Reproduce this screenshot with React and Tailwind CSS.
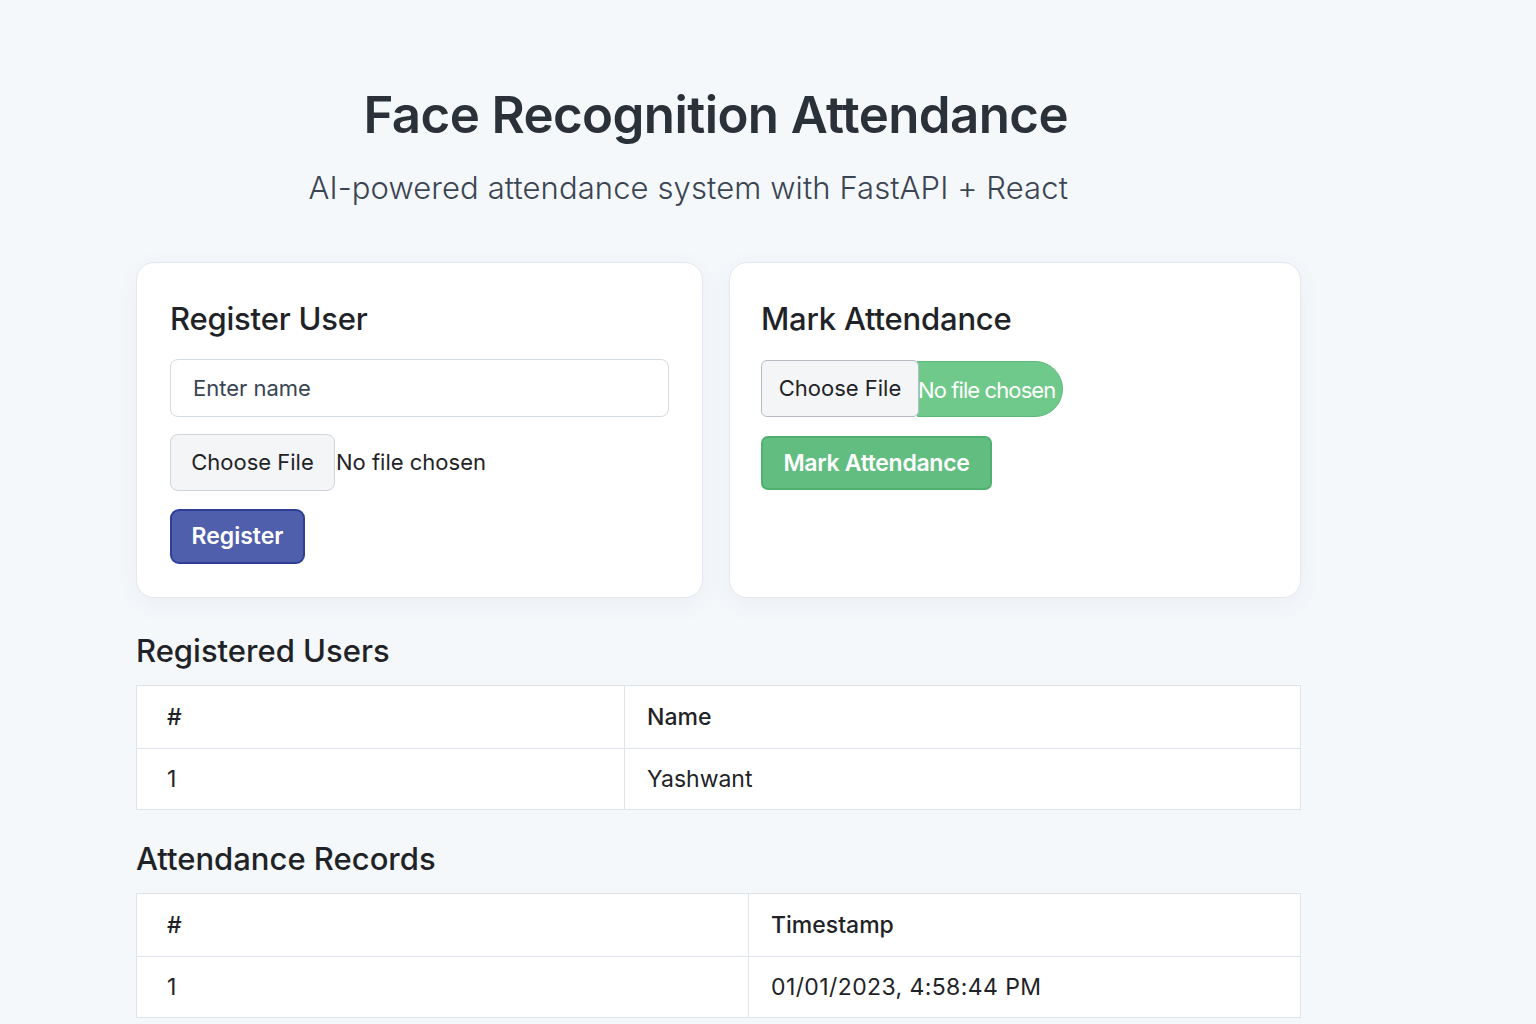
export default function App() {
  return (
    <div
      className="min-h-screen bg-[#f5f8fb] text-[#1f2328]"
      style={{ fontFamily: "Inter, 'Noto Sans', sans-serif" }}
    >
      <div className="w-[1165px] ml-[136px] pt-[84px]">
        {/* Header */}
        <div className="w-[932px] text-right">
          <h1 className="text-[51px] font-semibold leading-[62px] text-[#2b3138] tracking-[-0.6px]">
            Face Recognition Attendance
          </h1>
          <p className="mt-[22px] text-[31px] leading-[40px] text-[#3a4452] font-light tracking-[0.1px]">
            AI-powered attendance system with FastAPI + React
          </p>
        </div>

        {/* Cards */}
        <div className="mt-[54px] flex gap-[26px]">
          <div className="w-[567px] h-[336px] bg-white rounded-[18px] border border-[#e3e8ef] shadow-[0_6px_24px_rgba(30,50,90,0.05)] px-[33px] pt-[36px]">
            <h2 className="text-[31px] font-medium leading-[40px] text-[#1f2328] tracking-[-0.2px]">
              Register User
            </h2>
            <div className="mt-[20px] w-[499px] h-[58px] rounded-[8px] border border-[#d5dbe3] flex items-center px-[22px] text-[22px] text-[#3a4452]">
              Enter name
            </div>
            <div className="mt-[17px] flex items-center">
              <div className="w-[165px] h-[57px] rounded-[8px] border border-[#cfd4da] bg-[#f4f5f6] flex items-center justify-center text-[22px] text-[#1f2328]">
                Choose File
              </div>
              <span className="ml-[1px] text-[22px] text-[#1f2328]">
                No file chosen
              </span>
            </div>
            <button className="mt-[18px] w-[135px] h-[55px] rounded-[9px] border-2 border-[#2f3f98] bg-[#4f5fab] text-white text-[23px] font-semibold">
              Register
            </button>
          </div>

          <div className="w-[572px] h-[336px] bg-white rounded-[18px] border border-[#e3e8ef] shadow-[0_6px_24px_rgba(30,50,90,0.05)] px-[31px] pt-[36px]">
            <h2 className="text-[31px] font-medium leading-[40px] text-[#1f2328] tracking-[-0.2px]">
              Mark Attendance
            </h2>
            <div className="mt-[21px] flex items-center">
              <div className="relative z-10 w-[158px] h-[57px] rounded-[6px] border border-[#b8bcc2] bg-[#f4f5f6] flex items-center justify-center text-[22px] text-[#1f2328]">
                Choose File
              </div>
              <div className="-ml-[2px] h-[56px] w-[146px] rounded-r-full bg-[#6fc98a] border border-[#5cb877] flex items-center pt-[3px] text-[22px] text-white tracking-[-0.9px] whitespace-nowrap overflow-hidden">
                No file chosen
              </div>
            </div>
            <button className="mt-[19px] w-[231px] h-[54px] rounded-[7px] border-2 border-[#4fb06f] bg-[#62bd80] text-white text-[23px] font-semibold tracking-[-0.3px]">
              Mark Attendance
            </button>
          </div>
        </div>

        {/* Registered Users */}
        <h2 className="mt-[33px] text-[31px] font-medium leading-[40px] text-[#1f2328]">
          Registered Users
        </h2>
        <table className="mt-[14px] w-full border-collapse bg-white text-[23px] text-[#1f2328]">
          <tbody>
            <tr className="h-[63px]">
              <td className="w-[488px] border border-[#dfe4ea] pl-[30px] font-medium">#</td>
              <td className="border border-[#dfe4ea] pl-[22px] font-medium">Name</td>
            </tr>
            <tr className="h-[61px]">
              <td className="border border-[#dfe4ea] pl-[30px]">1</td>
              <td className="border border-[#dfe4ea] pl-[22px]">Yashwant</td>
            </tr>
          </tbody>
        </table>

        {/* Attendance Records */}
        <h2 className="mt-[29px] text-[31px] font-medium leading-[40px] text-[#1f2328]">
          Attendance Records
        </h2>
        <table className="mt-[14px] w-full border-collapse bg-white text-[23px] text-[#1f2328]">
          <tbody>
            <tr className="h-[63px]">
              <td className="w-[612px] border border-[#dfe4ea] pl-[30px] font-medium">#</td>
              <td className="border border-[#dfe4ea] pl-[22px] font-medium">Timestamp</td>
            </tr>
            <tr className="h-[61px]">
              <td className="border border-[#dfe4ea] pl-[30px]">1</td>
              <td className="border border-[#dfe4ea] pl-[22px] tracking-[0.4px]">01/01/2023, 4:58:44 PM</td>
            </tr>
          </tbody>
        </table>
      </div>
    </div>
  );
}
